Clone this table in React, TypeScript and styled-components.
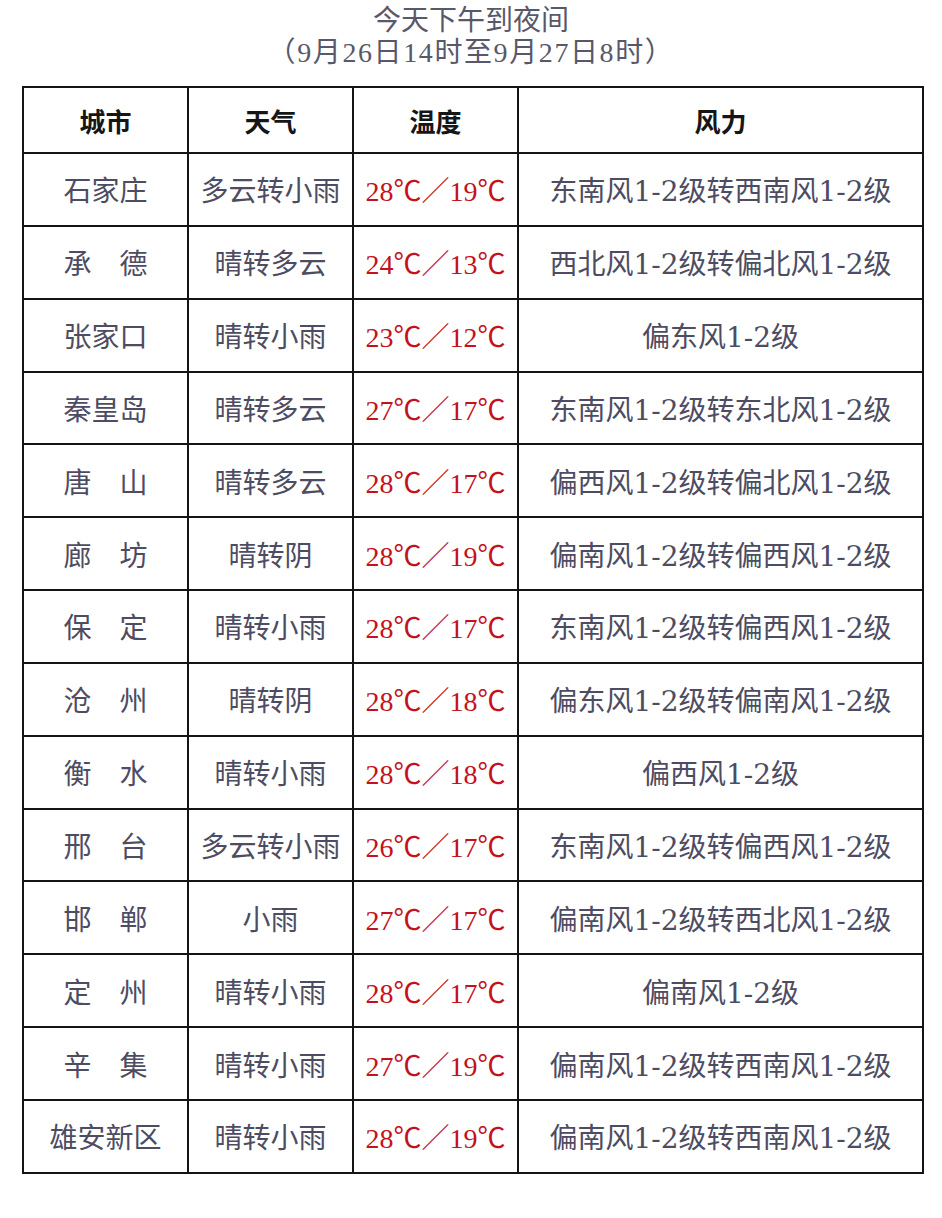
import React from "react";
import styled, { createGlobalStyle } from "styled-components";

const GlobalStyle = createGlobalStyle`
  html, body {
    margin: 0;
    padding: 0;
    background: #ffffff;
  }
  body {
    font-family: "Liberation Serif", "Noto Sans CJK SC", serif;
  }
`;

const Page = styled.div`
  width: 942px;
  display: flex;
  flex-direction: column;
  align-items: center;
`;

const Title = styled.div`
  padding-top: 5px;
  height: 86px;
  box-sizing: border-box;
  text-align: center;
  color: #58586a;
  font-size: 28px;
  line-height: 32px;
`;

const SubTitle = styled.span`
  letter-spacing: 1.6px;
`;

const Table = styled.table`
  width: 900px;
  margin-left: 4px;
  border-collapse: collapse;
  table-layout: fixed;
`;

const HeadCell = styled.th<{ $w: number }>`
  width: ${(p) => p.$w}px;
  height: 64px;
  border: 2px solid #141414;
  font-size: 26px;
  font-weight: bold;
  color: #161616;
  text-align: center;
  padding: 0;
`;

const Cell = styled.td<{ $red?: boolean; $wind?: boolean }>`
  height: 70.85px;
  border: 2px solid #141414;
  font-size: 28px;
  font-family: ${(p) =>
    p.$wind
      ? `"DejaVu Serif", "Noto Sans CJK SC", serif`
      : `"Liberation Serif", "Noto Sans CJK SC", serif`};
  color: ${(p) => (p.$red ? "#c4121c" : "#4d4c62")};
  text-align: center;
  padding: 0;
  white-space: nowrap;
`;

type Row = [string, string, string, string];

const rows: Row[] = [
  ["石家庄", "多云转小雨", "28℃／19℃", "东南风1-2级转西南风1-2级"],
  ["承\u3000德", "晴转多云", "24℃／13℃", "西北风1-2级转偏北风1-2级"],
  ["张家口", "晴转小雨", "23℃／12℃", "偏东风1-2级"],
  ["秦皇岛", "晴转多云", "27℃／17℃", "东南风1-2级转东北风1-2级"],
  ["唐\u3000山", "晴转多云", "28℃／17℃", "偏西风1-2级转偏北风1-2级"],
  ["廊\u3000坊", "晴转阴", "28℃／19℃", "偏南风1-2级转偏西风1-2级"],
  ["保\u3000定", "晴转小雨", "28℃／17℃", "东南风1-2级转偏西风1-2级"],
  ["沧\u3000州", "晴转阴", "28℃／18℃", "偏东风1-2级转偏南风1-2级"],
  ["衡\u3000水", "晴转小雨", "28℃／18℃", "偏西风1-2级"],
  ["邢\u3000台", "多云转小雨", "26℃／17℃", "东南风1-2级转偏西风1-2级"],
  ["邯\u3000郸", "小雨", "27℃／17℃", "偏南风1-2级转西北风1-2级"],
  ["定\u3000州", "晴转小雨", "28℃／17℃", "偏南风1-2级"],
  ["辛\u3000集", "晴转小雨", "27℃／19℃", "偏南风1-2级转西南风1-2级"],
  ["雄安新区", "晴转小雨", "28℃／19℃", "偏南风1-2级转西南风1-2级"],
];

export default function App() {
  return (
    <Page>
      <GlobalStyle />
      <Title>
        今天下午到夜间
        <br />
        <SubTitle>（9月26日14时至9月27日8时）</SubTitle>
      </Title>
      <Table>
        <thead>
          <tr>
            <HeadCell $w={163}>城市</HeadCell>
            <HeadCell $w={163}>天气</HeadCell>
            <HeadCell $w={163}>温度</HeadCell>
            <HeadCell $w={403}>风力</HeadCell>
          </tr>
        </thead>
        <tbody>
          {rows.map((r) => (
            <tr key={r[0]}>
              <Cell>{r[0]}</Cell>
              <Cell>{r[1]}</Cell>
              <Cell $red>{r[2]}</Cell>
              <Cell $wind>{r[3]}</Cell>
            </tr>
          ))}
        </tbody>
      </Table>
    </Page>
  );
}
